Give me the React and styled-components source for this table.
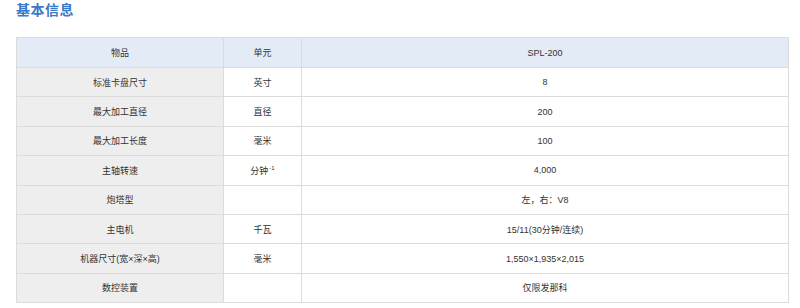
import React from "react";
import styled, { createGlobalStyle } from "styled-components";

const GlobalStyle = createGlobalStyle`
  html, body {
    margin: 0;
    padding: 0;
    background: #fff;
    font-family: "Liberation Sans", "Noto Sans CJK SC", sans-serif;
  }
`;

const rows = [
  { item: "标准卡盘尺寸", unit: "英寸", value: "8" },
  { item: "最大加工直径", unit: "直径", value: "200" },
  { item: "最大加工长度", unit: "毫米", value: "100" },
  { item: "主轴转速", unit: "分钟", sup: "-1", value: "4,000" },
  { item: "炮塔型", unit: "", value: "左，右：V8" },
  { item: "主电机", unit: "千瓦", value: "15/11(30分钟/连续)" },
  { item: "机器尺寸(宽×深×高)", unit: "毫米", value: "1,550×1,935×2,015" },
  { item: "数控装置", unit: "", value: "仅限发那科" },
];

const App = () => {
  return (
    <Page>
      <GlobalStyle />
      <Title>基本信息</Title>
      <SpecTable>
        <colgroup>
          <col style={{ width: "207px" }} />
          <col style={{ width: "78px" }} />
          <col />
        </colgroup>
        <thead>
          <tr>
            <HeadCell>物品</HeadCell>
            <HeadCell>单元</HeadCell>
            <HeadCell>SPL-200</HeadCell>
          </tr>
        </thead>
        <tbody>
          {rows.map((r) => (
            <BodyRow key={r.item}>
              <LabelCell>{r.item}</LabelCell>
              <Cell>
                {r.unit}
                {r.sup && <sup>{r.sup}</sup>}
              </Cell>
              <Cell>{r.value}</Cell>
            </BodyRow>
          ))}
        </tbody>
      </SpecTable>
    </Page>
  );
};

export default App;

const Page = styled.div`
  padding: 2px 11px 0 16px;
`;

const Title = styled.h2`
  margin: 0;
  font-size: 14px;
  line-height: 16px;
  font-weight: bold;
  color: #3a78c9;
  letter-spacing: 0.5px;
`;

const SpecTable = styled.table`
  margin-top: 19px;
  width: 773px;
  border-collapse: collapse;
  table-layout: fixed;
  color: #333;
  font-size: 9px;
`;

const HeadCell = styled.th`
  height: 29px;
  padding: 0;
  background: #e3ebf6;
  border: 1px solid #dcdcdc;
  font-weight: normal;
  text-align: center;
`;

const BodyRow = styled.tr`
  height: 29.4px;
`;

const Cell = styled.td`
  padding: 0;
  border: 1px solid #dcdcdc;
  text-align: center;
  background: #fff;

  sup {
    font-size: 6px;
    vertical-align: 4px;
    line-height: 0;
    margin-left: 1px;
  }
`;

const LabelCell = styled(Cell)`
  background: #eeeeee;
`;
